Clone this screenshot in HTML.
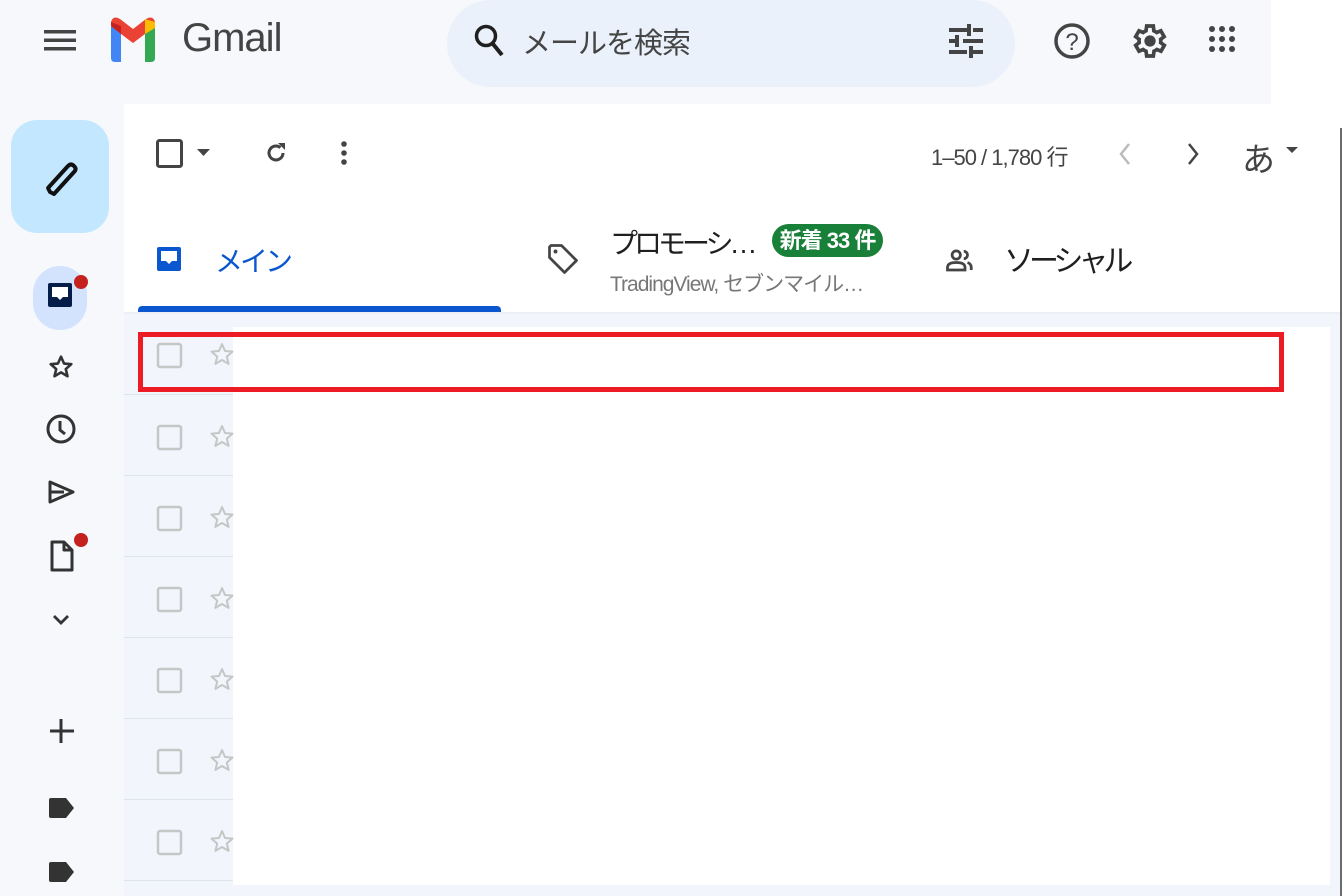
<!DOCTYPE html>
<html><head><meta charset="utf-8"><style>
*{margin:0;padding:0;box-sizing:border-box}
body{width:1344px;height:896px;overflow:hidden;background:#fff;font-family:"Liberation Sans","Noto Sans CJK JP",sans-serif;position:relative}
.a{position:absolute}
svg{position:absolute;overflow:visible}
.t{color:#1f1f1f;white-space:nowrap}
</style></head><body>
<div class="a" style="left:0;top:0;width:1271px;height:104px;background:#f6f8fc"></div>
<div class="a" style="left:0;top:104px;width:124px;height:792px;background:#f6f8fc"></div>
<div class="a" style="left:124px;top:104px;width:1216px;height:792px;background:#fff;border-top-left-radius:16px"></div>
<div class="a" style="left:1340px;top:128px;width:2px;height:768px;background:#6b6b6b"></div>
<!-- header -->
<svg style="left:44px;top:28px" width="34" height="24"><g fill="#444"><rect x="0" y="2" width="32" height="3.5"/><rect x="0" y="10.5" width="32" height="3.5"/><rect x="0" y="19" width="32" height="3.5"/></g></svg>
<svg style="left:111px;top:16px" width="44" height="46" viewBox="0 0 44 46">
<path d="M0 6 L0 42 Q0 46 4 46 L10 46 L10 18 Z" fill="#4285f4"/>
<path d="M34 18 L34 46 L40 46 Q44 46 44 42 L44 6 Z" fill="#34a853"/>
<path d="M0 6 Q2 -1 9 3 L22 13 L35 3 Q42 -1 44 6 L44 10 L34 18 L22 27 L10 18 L0 10 Z" fill="#ea4335"/>
<path d="M34 3 L44 6 L44 12 L34 18 Z" fill="#fbbc04"/>
<path d="M0 6 L10 10 L10 18 L0 10 Z" fill="#c5221f"/>
</svg>
<div class="a t" style="left:182px;top:16px;font-size:40px;color:#444;letter-spacing:-1px">Gmail</div>
<div class="a" style="left:447px;top:0;width:568px;height:87px;background:#eaf1fb;border-radius:44px"></div>
<svg style="left:474px;top:24px" width="32" height="36"><circle cx="12" cy="12" r="9.5" stroke="#1f1f1f" stroke-width="3.5" fill="none"/><line x1="19" y1="20" x2="28" y2="31" stroke="#1f1f1f" stroke-width="4"/></svg>
<div class="a t" style="left:522px;top:20px;font-size:29px;color:#444;letter-spacing:-1px">メールを検索</div>
<svg style="left:949px;top:24px" width="34" height="36"><g fill="#444"><rect x="0" y="4" width="18" height="4"/><rect x="24" y="4" width="10" height="4"/><rect x="18" y="0" width="4" height="12"/><rect x="0" y="15" width="6" height="4"/><rect x="14" y="15" width="20" height="4"/><rect x="6" y="11" width="4" height="12"/><rect x="0" y="26" width="18" height="4"/><rect x="24" y="26" width="10" height="4"/><rect x="20" y="22" width="4" height="12"/></g></svg>
<svg style="left:1054px;top:22px" width="38" height="40"><circle cx="18" cy="19" r="16" stroke="#444" stroke-width="3.5" fill="none"/><text x="18" y="28" font-size="24" text-anchor="middle" fill="#444" font-family="Liberation Sans">?</text></svg>
<svg style="left:1130px;top:20px" width="40" height="42" viewBox="0 0 24 24"><path d="M19.4 13a7.5 7.5 0 0 0 0-2l2.1-1.6-2-3.5-2.5 1a7 7 0 0 0-1.7-1L15 3h-4l-.4 2.9a7 7 0 0 0-1.7 1l-2.5-1-2 3.5L6.5 11a7.5 7.5 0 0 0 0 2l-2.1 1.6 2 3.5 2.5-1a7 7 0 0 0 1.7 1L11 21h4l.4-2.9a7 7 0 0 0 1.7-1l2.5 1 2-3.5z" fill="none" stroke="#444" stroke-width="2.2" transform="translate(-1 0)"/><circle cx="12" cy="12" r="3.4" fill="#444"/></svg>
<svg style="left:1208px;top:25px" width="32" height="32"><g fill="#444"><circle cx="4" cy="4" r="3"/><circle cx="14" cy="4" r="3"/><circle cx="24" cy="4" r="3"/><circle cx="4" cy="14" r="3"/><circle cx="14" cy="14" r="3"/><circle cx="24" cy="14" r="3"/><circle cx="4" cy="24" r="3"/><circle cx="14" cy="24" r="3"/><circle cx="24" cy="24" r="3"/></g></svg>
<!-- left rail -->
<div class="a" style="left:11px;top:120px;width:98px;height:113px;background:#c2e7ff;border-radius:26px"></div>
<svg style="left:44px;top:160px" width="34" height="38"><path d="M6 32 L4 28 L24 6 Q27 3 30 6 Q33 9 30 12 L10 34 Z" fill="none" stroke="#111" stroke-width="4" stroke-linejoin="round"/></svg>
<div class="a" style="left:33px;top:266px;width:54px;height:64px;background:#d3e3fd;border-radius:27px"></div>
<svg style="left:48px;top:283px" width="28" height="30"><rect x="0" y="0" width="24" height="24" rx="2" fill="#041e49"/><path d="M4 4 H20 V14 H15 L12 17 L9 14 H4 Z" fill="#fff"/></svg>
<div class="a" style="left:74px;top:275px;width:14px;height:14px;background:#c5221f;border-radius:50%"></div>
<svg style="left:48px;top:354px" width="26" height="26" viewBox="0 0 24 24"><path d="M12 2.5l2.8 6.3 6.7.6-5.1 4.5 1.6 6.6L12 17l-6 3.5 1.6-6.6-5.1-4.5 6.7-.6z" fill="none" stroke="#333" stroke-width="2.4" stroke-linejoin="round"/></svg>
<svg style="left:46px;top:414px" width="30" height="30"><circle cx="15" cy="15" r="13" stroke="#333" stroke-width="3" fill="none"/><path d="M14 7 V16 L19 20" stroke="#333" stroke-width="3" fill="none"/></svg>
<svg style="left:48px;top:480px" width="28" height="28"><path d="M2 2 L25 12 L2 22 Z M2 12 H16" stroke="#333" stroke-width="3" fill="none" stroke-linejoin="round"/></svg>
<svg style="left:50px;top:540px" width="26" height="34"><path d="M2 2 H14 L22 10 V30 H2 Z M14 2 V10 H22" stroke="#333" stroke-width="3" fill="none" stroke-linejoin="round"/></svg>
<div class="a" style="left:74px;top:533px;width:14px;height:14px;background:#c5221f;border-radius:50%"></div>
<svg style="left:52px;top:614px" width="20" height="14"><path d="M2 2 L9 9 L16 2" stroke="#333" stroke-width="2.8" fill="none"/></svg>
<svg style="left:50px;top:719px" width="24" height="24"><path d="M11 0 V24 M0 12 H24" stroke="#333" stroke-width="3"/></svg>
<svg style="left:48px;top:797px" width="28" height="24"><path d="M3 1 H18 L26 11 L18 21 H3 Q1 21 1 19 V3 Q1 1 3 1 Z" fill="#333"/></svg>
<svg style="left:48px;top:861px" width="28" height="24"><path d="M3 1 H18 L26 11 L18 21 H3 Q1 21 1 19 V3 Q1 1 3 1 Z" fill="#333"/></svg>
<!-- toolbar -->
<svg style="left:156px;top:139px" width="30" height="30"><rect x="1.5" y="1.5" width="24" height="26" rx="2" stroke="#444" stroke-width="3" fill="none"/></svg>
<svg style="left:197px;top:148px" width="16" height="10"><path d="M0 1 H13 L6.5 8 Z" fill="#444"/></svg>
<svg style="left:264px;top:140px" width="24" height="26" viewBox="0 0 24 24"><path d="M19 12a7 7 0 1 1-2.5-5.4" stroke="#444" stroke-width="3" fill="none"/><path d="M14 2 H21 V9 Z" fill="#444"/></svg>
<svg style="left:340px;top:140px" width="8" height="26"><circle cx="4" cy="4" r="2.8" fill="#444"/><circle cx="4" cy="13" r="2.8" fill="#444"/><circle cx="4" cy="22" r="2.8" fill="#444"/></svg>
<div class="a t" style="left:931px;top:140px;font-size:22px;color:#444;letter-spacing:-1px">1–50 / 1,780 行</div>
<svg style="left:1118px;top:142px" width="14" height="24"><path d="M11 2 L3 12 L11 22" stroke="#bbb" stroke-width="2.5" fill="none"/></svg>
<svg style="left:1186px;top:142px" width="14" height="24"><path d="M3 2 L11 12 L3 22" stroke="#444" stroke-width="2.5" fill="none"/></svg>
<div class="a t" style="left:1242px;top:133px;font-size:33px;color:#444">あ</div>
<svg style="left:1286px;top:146px" width="14" height="10"><path d="M0 1 H12 L6 7 Z" fill="#444"/></svg>
<!-- tabs -->
<svg style="left:157px;top:247px" width="26" height="28"><rect x="0" y="0" width="24" height="24" rx="2" fill="#0b57d0"/><path d="M4 4 H20 V14 H15 L12 17 L9 14 H4 Z" fill="#fff"/></svg>
<div class="a t" style="left:215px;top:240px;font-size:28px;color:#0b57d0;letter-spacing:-3px">メイン</div>
<div class="a" style="left:138px;top:306px;width:363px;height:7px;background:#0b57d0;border-radius:4px 4px 0 0"></div>
<div class="a" style="left:124px;top:312px;width:1216px;height:2px;background:#eceff3"></div>
<svg style="left:545px;top:240px" width="36" height="38" viewBox="0 0 24 24"><path d="M3 4 V11 L13 21 L21 13 L11 3 H4 Z" stroke="#444" stroke-width="1.8" fill="none" stroke-linejoin="round"/><circle cx="7" cy="7" r="1.3" fill="#444"/></svg>
<div class="a t" style="left:610px;top:222px;font-size:28px;letter-spacing:-4px">プロモーシ…</div>
<div class="a t" style="left:772px;top:224px;width:111px;height:33px;border-radius:17px;background:#188038;color:#fff;font-size:22px;text-align:center;line-height:33px;font-weight:bold;letter-spacing:-1px">新着 33 件</div>
<div class="a t" style="left:610px;top:268px;font-size:21px;color:#777;letter-spacing:-1px">TradingView, セブンマイル…</div>
<svg style="left:945px;top:245px" width="30" height="30" viewBox="0 0 24 24"><circle cx="9" cy="8" r="3.3" stroke="#444" stroke-width="2.2" fill="none"/><path d="M2 20 V18 Q2 14 9 14 Q16 14 16 18 V20 Z" stroke="#444" stroke-width="2.2" fill="none"/><path d="M15 5 A3 3 0 0 1 15 11 M18 14 Q21 15 21 18 V20" stroke="#444" stroke-width="2.2" fill="none"/></svg>
<div class="a t" style="left:1004px;top:236px;font-size:30px;letter-spacing:-5px">ソーシャル</div>
<!-- rows -->
<div class="a" style="left:124px;top:314px;width:1216px;height:582px;background:#f2f6fc"></div>
<div class="a" style="left:233px;top:327px;width:1097px;height:558px;background:#fff"></div>
<div class="a" style="left:124px;top:394px;width:109px;height:1px;background:#dde3ea"></div>
<div class="a" style="left:124px;top:475px;width:109px;height:1px;background:#dde3ea"></div>
<div class="a" style="left:124px;top:556px;width:109px;height:1px;background:#dde3ea"></div>
<div class="a" style="left:124px;top:637px;width:109px;height:1px;background:#dde3ea"></div>
<div class="a" style="left:124px;top:718px;width:109px;height:1px;background:#dde3ea"></div>
<div class="a" style="left:124px;top:799px;width:109px;height:1px;background:#dde3ea"></div>
<div class="a" style="left:124px;top:880px;width:109px;height:1px;background:#dde3ea"></div>
<svg style="left:0;top:0" width="1344" height="896">
<defs><g id="r"><rect x="158" y="0" width="23" height="23" rx="2" stroke="#c4c7c5" stroke-width="2.5" fill="none"/><path d="M222 0l3 7 7.5.6-5.7 5 1.8 7.3L222 16l-6.6 3.9 1.8-7.3-5.7-5 7.5-.6z" fill="none" stroke="#c4c7c5" stroke-width="2" stroke-linejoin="round"/></g></defs>
<use href="#r" y="344"/><use href="#r" y="426"/><use href="#r" y="507"/><use href="#r" y="588"/><use href="#r" y="669"/><use href="#r" y="750"/><use href="#r" y="831"/>
<rect x="140.5" y="334.5" width="1141" height="55" fill="none" stroke="#ed1c24" stroke-width="5"/>
</svg>
</body></html>
